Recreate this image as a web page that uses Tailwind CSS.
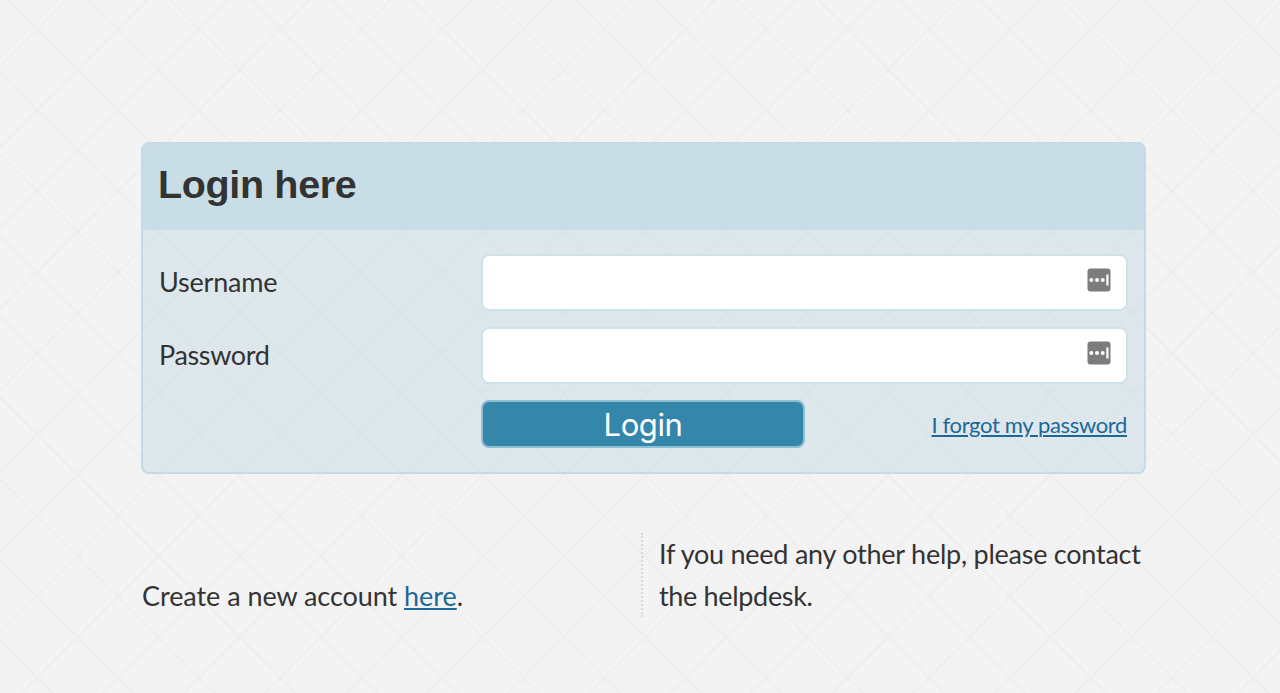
<!DOCTYPE html>
<html lang="en">
<head>
  <meta charset="UTF-8" />
  <title>Login</title>
  <script src="https://cdn.jsdelivr.net/npm/@tailwindcss/browser@4"></script>
</head>
<body class="relative bg-[#f3f3f3] text-[#333] font-[Lato,sans-serif] h-[693px] overflow-hidden">
  <!-- Diamond background -->
  <svg class="absolute inset-0 -z-10 w-full h-full" fill="none">
    <defs>
      <pattern id="diamonds" x="37" y="29" width="81.07" height="81.07" patternUnits="userSpaceOnUse">
        <path d="M0 0L81.07 81.07M81.07 0L0 81.07" stroke="#eeeeee" stroke-width="2.2" />
      </pattern>
    </defs>
    <rect width="100%" height="100%" fill="url(#diamonds)" />
  </svg>

  <main class="w-[1005px] ml-[141px] pt-[142px]">
    <!-- Login box -->
    <section class="h-[332px] border-2 border-[#c5dae6] rounded-lg bg-[#bcd4e2]/40 overflow-hidden">
      <h1 class="h-[86px] pl-[15px] bg-[#c8dde5] font-[Liberation_Sans,sans-serif] text-[39.5px] leading-[80px] tracking-[-0.35px] font-bold">Login here</h1>

      <form class="grid grid-cols-[322px_647px] gap-y-[17px] pt-[24px] pl-4">
        <label for="username" class="text-[27px] leading-[56px] tracking-[-0.2px]">Username</label>
        <div class="relative">
          <input id="username" type="text" class="block w-full h-[57px] -mb-px bg-white border-2 border-[#cfe1e9] rounded-lg" />
          <svg class="absolute right-[17px] top-[14px] w-6 h-6" viewBox="0 0 24 24">
            <rect x=".5" y=".5" width="23" height="23" rx="3" fill="#7c7c7c" />
            <g fill="#fff">
              <circle cx="4.3" cy="12" r="2" />
              <circle cx="10" cy="12" r="2" />
              <circle cx="15.7" cy="12" r="2" />
              <rect x="19.3" y="6.5" width="2.2" height="11" />
            </g>
          </svg>
        </div>

        <label for="password" class="text-[27px] leading-[56px] tracking-[-0.35px]">Password</label>
        <div class="relative">
          <input id="password" type="password" class="block w-full h-[57px] -mb-px bg-white border-2 border-[#cfe1e9] rounded-lg" />
          <svg class="absolute right-[17px] top-[14px] w-6 h-6" viewBox="0 0 24 24">
            <rect x=".5" y=".5" width="23" height="23" rx="3" fill="#7c7c7c" />
            <g fill="#fff">
              <circle cx="4.3" cy="12" r="2" />
              <circle cx="10" cy="12" r="2" />
              <circle cx="15.7" cy="12" r="2" />
              <rect x="19.3" y="6.5" width="2.2" height="11" />
            </g>
          </svg>
        </div>

        <div class="col-start-2 flex items-center justify-between">
          <button class="w-[324px] h-[48px] bg-[#3586ab] border-2 border-[#8fbfd2] rounded-lg text-white font-[Inter,sans-serif] text-[31px] leading-[45px] tracking-[-0.4px]">Login</button>
          <a href="#" class="mr-px text-[#1c6898] text-[22px] tracking-[-0.35px] underline decoration-2 underline-offset-2 whitespace-nowrap">I forgot my password</a>
        </div>
      </form>
    </section>

    <!-- Help links -->
    <div class="flex items-end mt-[59px] text-[27px] leading-[42px] whitespace-nowrap">
      <p class="w-[500px] shrink-0 pl-px tracking-[-0.05px]">Create a new account <a href="#" class="text-[#1c6898] underline decoration-2 underline-offset-2">here</a>.</p>
      <p class="border-l-2 border-dotted border-[#cbdde8] pl-4 tracking-[-0.24px]">If you need any other help, please contact<br /><span class="tracking-[-0.33px]">the helpdesk.</span></p>
    </div>
  </main>
</body>
</html>
